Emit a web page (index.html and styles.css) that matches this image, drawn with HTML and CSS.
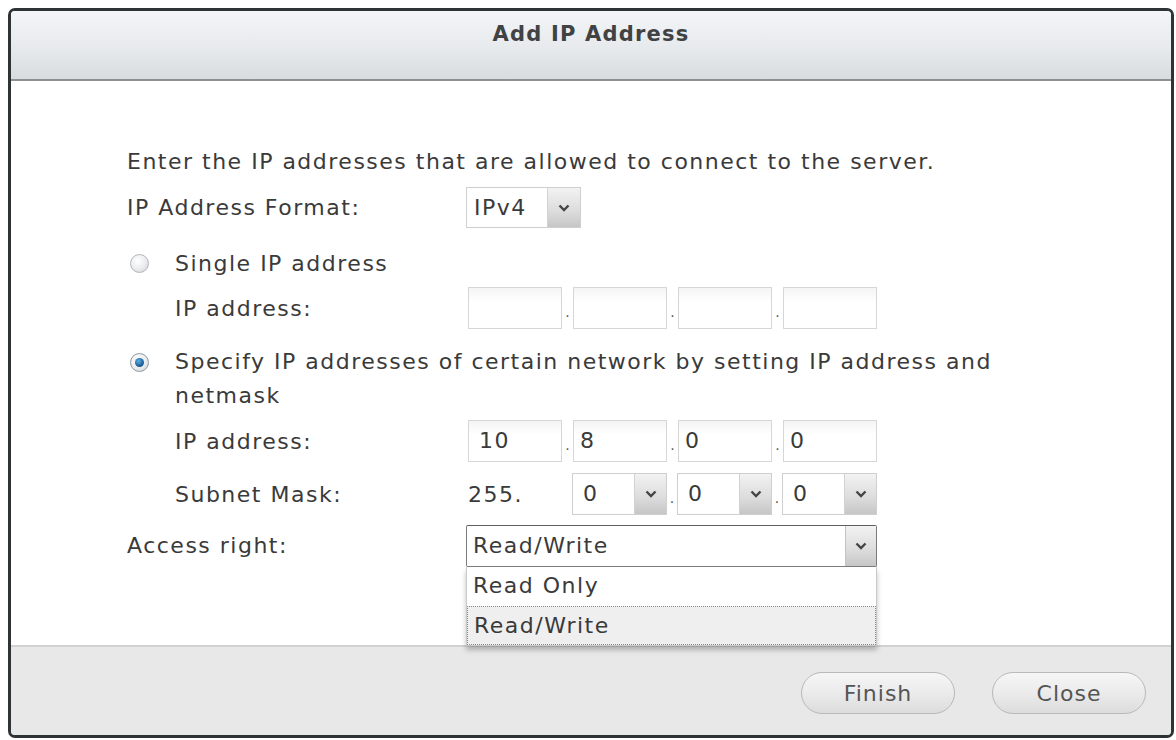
FILE: index.html
```html
<!DOCTYPE html>
<html lang="en">
<head>
  <meta charset="UTF-8" />
  <title>Add IP Address</title>
  <link rel="stylesheet" href="styles.css">
</head>
<body>
  <div class="dialog">
    <div class="dialog-header">Add IP Address</div>

    <div class="dialog-body">
      <div class="intro">Enter the IP addresses that are allowed to connect to the server.</div>

      <div class="row row-format">
        <div class="label">IP Address Format:</div>
        <div class="select select-format">
          <span class="select-value">IPv4</span>
          <span class="select-arrow"><svg width="12" height="8" viewBox="0 0 12 8"><path d="M1.5 1.5 L6 6 L10.5 1.5" fill="none" stroke="#444" stroke-width="2.4"/></svg></span>
        </div>
      </div>

      <div class="row row-radio">
        <span class="radio"></span>
        <span class="radio-text">Single IP address</span>
      </div>

      <div class="row row-ip">
        <div class="label label-indent">IP address:</div>
        <div class="ip-group">
          <span class="ip-box"></span><span class="dot">.</span>
          <span class="ip-box"></span><span class="dot">.</span>
          <span class="ip-box"></span><span class="dot">.</span>
          <span class="ip-box"></span>
        </div>
      </div>

      <div class="row row-radio2">
        <span class="radio radio-checked"></span>
        <span class="radio-text">Specify IP addresses of certain network by setting IP address and netmask</span>
      </div>

      <div class="row row-ip2">
        <div class="label label-indent">IP address:</div>
        <div class="ip-group">
          <span class="ip-box ip-first">10</span><span class="dot">.</span>
          <span class="ip-box">8</span><span class="dot">.</span>
          <span class="ip-box">0</span><span class="dot">.</span>
          <span class="ip-box">0</span>
        </div>
      </div>

      <div class="row row-mask">
        <div class="label label-indent">Subnet Mask:</div>
        <div class="ip-group">
          <span class="mask-fixed">255.</span>
          <div class="select select-mask">
            <span class="select-value">0</span>
            <span class="select-arrow"><svg width="12" height="8" viewBox="0 0 12 8"><path d="M1.5 1.5 L6 6 L10.5 1.5" fill="none" stroke="#444" stroke-width="2.4"/></svg></span>
          </div><span class="dot">.</span>
          <div class="select select-mask">
            <span class="select-value">0</span>
            <span class="select-arrow"><svg width="12" height="8" viewBox="0 0 12 8"><path d="M1.5 1.5 L6 6 L10.5 1.5" fill="none" stroke="#444" stroke-width="2.4"/></svg></span>
          </div><span class="dot">.</span>
          <div class="select select-mask">
            <span class="select-value">0</span>
            <span class="select-arrow"><svg width="12" height="8" viewBox="0 0 12 8"><path d="M1.5 1.5 L6 6 L10.5 1.5" fill="none" stroke="#444" stroke-width="2.4"/></svg></span>
          </div>
        </div>
      </div>

      <div class="row row-access">
        <div class="label">Access right:</div>
        <div class="access-wrap">
          <div class="select select-access">
            <span class="select-value">Read/Write</span>
            <span class="select-arrow"><svg width="12" height="8" viewBox="0 0 12 8"><path d="M1.5 1.5 L6 6 L10.5 1.5" fill="none" stroke="#444" stroke-width="2.4"/></svg></span>
          </div>
          <ul class="dropdown">
            <li class="option">Read Only</li>
            <li class="option option-active">Read/Write</li>
          </ul>
        </div>
      </div>
    </div>

    <div class="dialog-footer">
      <button class="btn">Finish</button>
      <button class="btn">Close</button>
    </div>
  </div>
</body>
</html>
```

FILE: styles.css
```css
body {
  margin: 0;
  background-color: #fff;
  font-family: "DejaVu Sans", Verdana, sans-serif;
  font-size: 22px;
  letter-spacing: 1.5px;
  color: #3a3a3a;
}

.dialog {
  margin: 8px 0 0 8px;
  width: 1160px;
  height: 724px;
  border: 3px solid #2e3436;
  border-radius: 7px;
  display: flex;
  flex-direction: column;
  overflow: hidden;
}

.dialog-header {
  height: 70px;
  padding-top: 11px;
  box-sizing: border-box;
  text-align: center;
  font-size: 21px;
  letter-spacing: 1.2px;
  font-weight: bold;
  color: #404244;
  background: linear-gradient(to bottom, #f3f5f7 0%, #e6e9ec 60%, #d8dcdf 100%);
  border-bottom: 2px solid #8e9193;
}

.dialog-body {
  flex: 1;
  padding: 66px 0 0 116px;
  background-color: #fff;
  position: relative;
}

.intro {
  height: 30px;
  line-height: 30px;
}

.row {
  display: flex;
  align-items: center;
}

.label {
  width: 339px;
  flex-shrink: 0;
}

.label-indent {
  width: 291px;
  padding-left: 48px;
}

.row-format {
  margin-top: 10px;
  height: 41px;
}

.row-radio {
  margin-top: 20px;
  height: 30px;
}

.row-ip {
  margin-top: 9px;
  height: 42px;
}

.row-radio2 {
  margin-top: 16px;
  align-items: flex-start;
  line-height: 34px;
  width: 880px;
}

.row-ip2 {
  margin-top: 7px;
  height: 42px;
}

.row-mask {
  margin-top: 11px;
  height: 42px;
}

.row-access {
  margin-top: 10px;
  height: 42px;
  align-items: flex-start;
}

.row-access .label {
  line-height: 42px;
}

/* radio buttons */
.radio {
  width: 17px;
  height: 17px;
  margin: 0 26px 0 3px;
  border-radius: 50%;
  border: 1px solid #b4b7ba;
  background: radial-gradient(circle at 40% 35%, #ffffff 0%, #e9ebed 55%, #c9cccf 100%);
  flex-shrink: 0;
  position: relative;
}

.row-radio2 .radio {
  margin-top: 8px;
}

.radio-checked {
  border-color: #8f9aa3;
}

.radio-checked::after {
  content: '';
  position: absolute;
  left: 4px;
  top: 4px;
  width: 9px;
  height: 9px;
  border-radius: 50%;
  background: radial-gradient(circle at 40% 35%, #5fb0e6 0%, #1d5f9b 60%, #0c3358 100%);
}

/* ip boxes */
.ip-group {
  display: flex;
  align-items: center;
}

.ip-box {
  width: 94px;
  height: 42px;
  box-sizing: border-box;
  border: 1px solid #d6d6d6;
  background: linear-gradient(to bottom, #f4f4f4 0%, #ffffff 35%);
  padding-left: 6px;
  line-height: 40px;
}

.ip-first {
  padding-left: 10px;
}

.ip-group .ip-box:first-child {
  margin-left: 2px;
}

.dot {
  width: 11px;
  text-align: center;
  font-size: 14px;
  letter-spacing: 0;
  line-height: 42px;
  padding-top: 8px;
  color: #555;
}

.mask-fixed {
  width: 104px;
  margin-left: 2px;
}

.row-mask .dot {
  width: 10px;
}

/* selects */
.select {
  display: flex;
  height: 42px;
  box-sizing: border-box;
  border: 1px solid #cfcfcf;
  background-color: #fff;
}

.select-value {
  flex: 1;
  line-height: 40px;
  padding-left: 7px;
}

.select-arrow {
  width: 31px;
  display: flex;
  align-items: center;
  justify-content: center;
  border-left: 1px solid #d2d2d2;
  background: linear-gradient(to bottom, #f2f2f2 0%, #dcdcdc 60%, #c6c6c6 100%);
}

.select-format {
  width: 115px;
  height: 41px;
}

.select-format .select-arrow {
  width: 32px;
}

.select-mask {
  width: 95px;
}

.select-mask .select-value {
  padding-left: 10px;
}

.access-wrap {
  position: relative;
  width: 411px;
}

.select-access {
  width: 411px;
  border: 1px solid #7c7c7c;
  border-top-color: #5f5f5f;
  border-radius: 2px;
}

.select-access .select-value {
  padding-left: 6px;
}

.select-access .select-arrow {
  width: 30px;
  border-left-color: #c4c4c4;
}

/* open dropdown list */
.dropdown {
  position: absolute;
  left: 0;
  top: 42px;
  width: 411px;
  margin: 0;
  padding: 0;
  list-style: none;
  box-sizing: border-box;
  border: 1px solid #c9c9c9;
  border-top: none;
  background-color: #fff;
  box-shadow: 0 4px 5px rgba(0, 0, 0, 0.25);
  z-index: 2;
}

.option {
  height: 39px;
  line-height: 38px;
  padding-left: 6px;
  box-sizing: border-box;
}

.option-active {
  background-color: #efefef;
  border: 1px dotted #8a8a8a;
}

/* footer */
.dialog-footer {
  height: 90px;
  box-sizing: border-box;
  background-color: #e8e8e8;
  border-top: 2px solid #d2d2d2;
  display: flex;
  justify-content: flex-end;
  align-items: flex-start;
  gap: 37px;
  padding: 25px 25px 0 0;
}

.btn {
  width: 154px;
  height: 42px;
  border-radius: 21px;
  border: 1px solid #b9b9b9;
  background: linear-gradient(to bottom, #f6f6f6 0%, #ebebeb 50%, #dcdcdc 100%);
  font-family: "DejaVu Sans", Verdana, sans-serif;
  font-size: 22px;
  letter-spacing: 1px;
  color: #555;
  cursor: pointer;
}
```
